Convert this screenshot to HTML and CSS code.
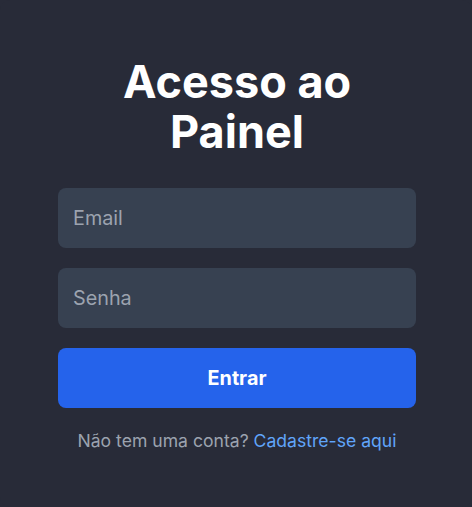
FILE: index.html
```html
<!DOCTYPE html>
<html lang="pt-BR">
<head>
<meta charset="utf-8">
<title>Acesso ao Painel</title>
<link rel="stylesheet" href="styles.css">
</head>
<body>
<main class="card">
  <h1 class="title">Acesso ao<br>Painel</h1>
  <form class="form">
    <input class="field" type="email" placeholder="Email">
    <input class="field" type="password" placeholder="Senha">
    <button class="submit" type="button">Entrar</button>
  </form>
  <p class="signup">Não tem uma conta? <a class="signup-link" href="#">Cadastre-se aqui</a></p>
</main>
</body>
</html>
```
FILE: styles.css
```css
html, body {
  margin: 0;
  padding: 0;
  background: #282b38;
  height: 100%;
}
body {
  font-family: Inter, "Noto Sans", sans-serif;
}
.card {
  box-sizing: border-box;
  height: 507px;
  padding: 57px 56px 0 58px;
  background: #282b38;
  border-radius: 10px;
}
.title {
  margin: 0 0 31px;
  text-align: center;
  color: #ffffff;
  font-size: 45px;
  line-height: 50px;
  font-weight: 700;
}
.form {
  display: flex;
  flex-direction: column;
  gap: 20px;
}
.field {
  box-sizing: border-box;
  height: 60px;
  width: 100%;
  border: none;
  border-radius: 8px;
  background: #374151;
  padding: 0 15px;
  font-family: inherit;
  font-size: 19.8px;
  color: #e5e7eb;
  outline: none;
}
.field::placeholder {
  color: #9ca3af;
}
.submit {
  height: 60px;
  border: none;
  border-radius: 8px;
  background: #2563eb;
  color: #ffffff;
  font-family: inherit;
  font-size: 19.8px;
  font-weight: 700;
}
.signup {
  margin: 20px 0 0;
  text-align: center;
  font-size: 17.6px;
  line-height: 26px;
  color: #9ca3af;
}
.signup-link {
  color: #60a5fa;
  text-decoration: none;
}
```
